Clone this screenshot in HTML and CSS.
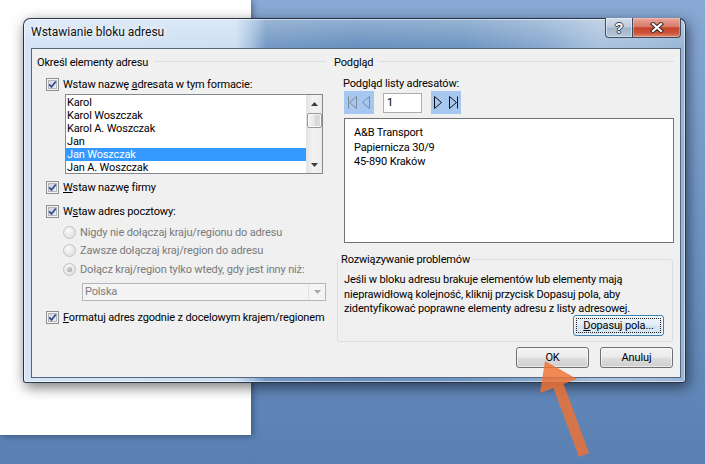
FILE: index.html
```html
<!DOCTYPE html>
<html lang="pl">
<head>
<meta charset="utf-8">
<title>Wstawianie bloku adresu</title>
<link rel="stylesheet" href="styles.css">
</head>
<body>
<div class="desktop">
  <div class="page"></div>
  <div class="dialog">
    <div class="titlebar">
      <span class="title">Wstawianie bloku adresu</span>
      <div class="caps">
        <div class="cap help"><span class="qmark">?</span></div>
        <div class="cap close">
          <svg width="14" height="11" viewBox="0 0 14 11"><path d="M3 2 L11 9 M11 2 L3 9" stroke="#3a2420" stroke-width="4.2" stroke-linecap="square" fill="none"/><path d="M3 2 L11 9 M11 2 L3 9" stroke="#fff" stroke-width="2.2" stroke-linecap="square" fill="none"/></svg>
        </div>
      </div>
    </div>
    <div class="client">
      <section class="col">
        <div class="ghead"><span>Określ elementy adresu</span></div>
        <div class="row r-name"><span class="cb"><svg width="11" height="11" viewBox="0 0 11 11"><path d="M2.3 5.4 L4.5 8 L8.8 2.4" fill="none" stroke="#2c4a8c" stroke-width="1.7"/></svg></span><span>Wstaw nazwę <u>a</u>dresata w tym formacie:</span></div>
        <div class="listbox">
          <ul class="items">
            <li>Karol</li>
            <li>Karol Woszczak</li>
            <li>Karol A. Woszczak</li>
            <li>Jan</li>
            <li class="sel">Jan Woszczak</li>
            <li>Jan A. Woszczak</li>
          </ul>
          <div class="vscroll">
            <div class="sarrow"><svg width="7" height="4" viewBox="0 0 7 4"><path d="M0 4 L3.5 0 L7 4Z" fill="#3c3c3c"/></svg></div>
            <div class="thumb"></div>
            <div class="track"></div>
            <div class="sarrow"><svg width="7" height="4" viewBox="0 0 7 4"><path d="M0 0 L3.5 4 L7 0Z" fill="#3c3c3c"/></svg></div>
          </div>
        </div>
        <div class="row r-firm"><span class="cb"><svg width="11" height="11" viewBox="0 0 11 11"><path d="M2.3 5.4 L4.5 8 L8.8 2.4" fill="none" stroke="#2c4a8c" stroke-width="1.7"/></svg></span><span><u>W</u>staw nazwę firmy</span></div>
        <div class="row r-post"><span class="cb"><svg width="11" height="11" viewBox="0 0 11 11"><path d="M2.3 5.4 L4.5 8 L8.8 2.4" fill="none" stroke="#2c4a8c" stroke-width="1.7"/></svg></span><span>W<u>s</u>taw adres pocztowy:</span></div>
        <div class="row radio r-rad1"><span class="rb"></span><span>Nigdy nie dołączaj kraju/regionu do adresu</span></div>
        <div class="row radio r-rad2"><span class="rb"></span><span>Zawsze dołączaj kraj/region do adresu</span></div>
        <div class="row radio r-rad3"><span class="rb"><span class="dot"></span></span><span>Dołącz kraj/region tylko wtedy, gdy jest inny niż:</span></div>
        <div class="combo">
          <span class="val">Polska</span>
          <span class="cbtn"><svg width="7" height="4" viewBox="0 0 7 4"><path d="M0 0 L3.5 4 L7 0Z" fill="#a8a8a8"/></svg></span>
        </div>
        <div class="row r-fmt"><span class="cb"><svg width="11" height="11" viewBox="0 0 11 11"><path d="M2.3 5.4 L4.5 8 L8.8 2.4" fill="none" stroke="#2c4a8c" stroke-width="1.7"/></svg></span><span><u>F</u>ormatuj adres zgodnie z docelowym krajem/regionem</span></div>
      </section>
      <section class="col">
        <div class="ghead"><span>Podgląd</span></div>
        <div class="sublabel">Podgląd listy adresatów:</div>
        <div class="nav">
          <div class="navgrp">
            <svg width="30" height="23" viewBox="0 0 30 23"><g fill="none" stroke="#7f8896" stroke-width="1"><path d="M4.5 5.5 V17.5"/><path d="M12.5 5.5 L5.5 11.5 L12.5 17.5 Z"/><path d="M25.5 5.5 L18.5 11.5 L25.5 17.5 Z"/></g></svg>
          </div>
          <div class="navnum">1</div>
          <div class="navgrp">
            <svg width="30" height="23" viewBox="0 0 30 23"><g fill="none" stroke="#111" stroke-width="1"><path d="M3.5 5.5 L10.5 11.5 L3.5 17.5 Z"/><path d="M18.5 5.5 L25.5 11.5 L18.5 17.5 Z"/><path d="M26.5 5.5 V17.5"/></g></svg>
          </div>
        </div>
        <div class="preview">A&amp;B Transport<br>Papiernicza 30/9<br>45-890 Kraków</div>
        <fieldset class="trouble">
          <legend>Rozwiązywanie problemów</legend>
          <div class="trouble-body">
            <p>Jeśli w bloku adresu brakuje elementów lub elementy mają<br>nieprawidłową kolejność, kliknij przycisk Dopasuj pola, aby<br>zidentyfikować poprawne elementy adresu z listy adresowej.</p>
            <div class="btn focus"><span><u>D</u>opasuj pola...</span></div>
          </div>
        </fieldset>
        <div class="actions">
          <div class="btn">OK</div>
          <div class="btn">Anuluj</div>
        </div>
      </section>
    </div>
  </div>
  <svg class="arrow" width="705" height="464" viewBox="0 0 705 464"><polygon points="545,361 577,379 563.6,383.9 589,453 579,457 553.4,388.1 540,393" fill="#f07232" fill-opacity="0.82"/></svg>
</div>
</body>
</html>
```

FILE: styles.css
```css
* { box-sizing: border-box; }
html, body { margin: 0; padding: 0; }
body {
  width: 705px;
  height: 464px;
  overflow: hidden;
  font-family: Roboto, "Liberation Sans", sans-serif;
  font-size: 11px;
  letter-spacing: -0.15px;
  color: #000;
}
.desktop {
  position: relative;
  width: 705px;
  height: 464px;
  overflow: hidden;
  background: linear-gradient(180deg, #89a9d5 0%, #7398c8 40%, #5a80b3 100%);
}
.page {
  position: absolute;
  left: 0;
  top: 0;
  width: 251px;
  height: 435px;
  background: #fff;
  box-shadow: 2px 1px 6px rgba(20, 30, 50, 0.45);
}
.dialog {
  position: absolute;
  left: 23px;
  top: 18px;
  width: 663px;
  height: 365px;
  display: flex;
  flex-direction: column;
  padding: 0 4px 4px 7px;
  border: 1px solid rgba(25, 38, 60, 0.9);
  border-radius: 7px 7px 3px 3px;
  background:
    linear-gradient(180deg, rgba(255,255,255,0.28) 0, rgba(255,255,255,0) 28px),
    linear-gradient(90deg, #d4e4f6 0, #cddff2 212px, #a9c4e2 226px, #7499c5 242px, #6991bf 330px, #6f96c2 440px, #89aacf 520px, #a9c2dd 575px, #a3bdda 620px, #97b4d5 663px);
  box-shadow: 2px 4px 14px rgba(0, 0, 0, 0.55), inset 0 0 0 1px rgba(255, 255, 255, 0.5);
}
.titlebar {
  height: 29px;
  display: flex;
  align-items: flex-start;
  flex: none;
}
.title {
  margin-top: 6px;
  font-size: 12px;
  letter-spacing: 0;
  line-height: 15px;
  color: #111;
  text-shadow: 0 0 6px rgba(255,255,255,0.9), 0 0 3px rgba(255,255,255,0.7);
}
.caps {
  margin-left: auto;
  display: flex;
  margin-top: -1px;
}
.cap {
  height: 20px;
  border: 1px solid #3e4c60;
  border-top: none;
  display: flex;
  align-items: center;
  justify-content: center;
}
.cap.help {
  width: 28px;
  border-radius: 0 0 0 4px;
  background: linear-gradient(180deg, #d2dde9 0%, #bccbdc 48%, #a2b4c9 52%, #b4c6da 100%);
  box-shadow: inset 0 0 0 1px rgba(255,255,255,0.45);
}
.qmark {
  font-family: "Liberation Sans", sans-serif;
  font-weight: bold;
  font-size: 14px;
  line-height: 14px;
  color: #fff;
  text-shadow: -1px 0 #2e3a4a, 1px 0 #2e3a4a, 0 -1px #2e3a4a, 0 1px #2e3a4a;
}
.cap.close {
  width: 48px;
  border-left: none;
  border-radius: 0 0 4px 0;
  background: linear-gradient(180deg, #e8a89a 0%, #d9796a 45%, #c5442c 52%, #cc5439 80%, #e08f72 100%);
  box-shadow: inset 0 0 0 1px rgba(255,220,210,0.35);
}
.cap svg { display: block; }
.client {
  flex: 1;
  background: #f0f0f0;
  border: 1px solid #54677e;
  padding: 6px 6px 0 5px;
  display: grid;
  grid-template-columns: 289px 340px;
  column-gap: 8px;
  align-items: start;
}
.col { display: flex; flex-direction: column; align-items: flex-start; }
.ghead {
  display: flex;
  align-items: center;
  height: 15px;
  line-height: 15px;
  align-self: stretch;
  white-space: nowrap;
}
.ghead::after {
  content: "";
  flex: 1;
  height: 1px;
  margin: -2px 0 0 6px;
  background: #d5dfe5;
}
.row {
  display: flex;
  align-items: center;
  height: 15px;
  line-height: 15px;
  white-space: nowrap;
  margin-left: 9px;
}
.cb {
  width: 13px;
  height: 13px;
  flex: none;
  margin-right: 4px;
  border: 1px solid #8e8f8f;
  background: linear-gradient(135deg, #c9cdd3, #f6f6f6);
  box-shadow: inset 0 0 0 1px #f4f4f4, inset 0 0 0 2px #b3b8be;
}
.cb svg { display: block; }
.r-name { margin-top: 7px; }
.listbox {
  margin: 2px 0 0 28px;
  width: 258px;
  height: 80px;
  border: 1px solid #828790;
  background: #fff;
  display: flex;
  overflow: hidden;
}
.items {
  list-style: none;
  margin: 0;
  padding: 1px 0 0 0;
  flex: 1;
  overflow: hidden;
}
.items li {
  height: 13px;
  line-height: 14px;
  padding-left: 1px;
  white-space: nowrap;
}
.items li.sel { background: #3399ff; color: #fff; }
.vscroll {
  width: 16px;
  flex: none;
  display: flex;
  flex-direction: column;
  align-items: center;
  background: linear-gradient(90deg, #e3e3e3, #f3f3f3 45%, #ececec);
}
.sarrow {
  width: 16px;
  height: 17px;
  flex: none;
  display: flex;
  align-items: center;
  justify-content: center;
}
.sarrow svg { display: block; }
.thumb {
  width: 15px;
  height: 15px;
  flex: none;
  margin-top: 1px;
  border: 1px solid #9a9a9a;
  border-radius: 2px;
  background: linear-gradient(90deg, #f4f4f4, #e6e6e6 50%, #d6d6d6 52%, #dddddd);
  box-shadow: inset 0 0 0 1px rgba(255,255,255,0.7);
}
.track { flex: 1; }
.r-firm { margin-top: 6px; }
.r-post { margin-top: 9px; }
.radio { margin-left: 26px; color: #7a7a7a; }
.r-rad1 { margin-top: 6px; }
.r-rad2 { margin-top: 3px; }
.r-rad3 { margin-top: 4px; }
.rb {
  width: 13px;
  height: 13px;
  flex: none;
  margin-right: 4px;
  border-radius: 50%;
  border: 1px solid #c4c4c4;
  background: radial-gradient(circle at 40% 35%, #fbfbfb, #e2e2e2 70%, #d9d9d9);
  display: flex;
  align-items: center;
  justify-content: center;
}
.dot {
  width: 5px;
  height: 5px;
  border-radius: 50%;
  background: radial-gradient(circle at 40% 35%, #d2d2d2, #9d9d9d);
}
.combo {
  margin: 6px 0 0 45px;
  width: 244px;
  height: 18px;
  border: 1px solid #b3b6b9;
  background: #f4f4f4;
  display: flex;
  color: #7a7a7a;
}
.combo .val { flex: 1; padding-left: 2px; line-height: 16px; }
.cbtn {
  width: 17px;
  flex: none;
  display: flex;
  align-items: center;
  justify-content: center;
  border-left: 1px solid #e2e2e2;
}
.r-fmt { margin-top: 9px; }
.sublabel { margin: 6px 0 0 9px; line-height: 15px; white-space: nowrap; }
.nav {
  margin-left: 10px;
  display: flex;
  align-items: center;
  height: 23px;
}
.navgrp { width: 30px; height: 23px; background: #a6c7ef; }
.navgrp svg { display: block; }
.navnum {
  width: 39px;
  height: 20px;
  margin: 0 9px;
  border: 1px solid #abadb3;
  background: #fff;
  padding-left: 3px;
  line-height: 18px;
}
.preview {
  margin: 4px 0 0 10px;
  width: 330px;
  height: 125px;
  border: 1px solid #727272;
  background: #fff;
  padding: 7px 0 0 9px;
  line-height: 14.5px;
  white-space: nowrap;
}
.trouble {
  margin: 9px 0 0 3px;
  width: 336px;
  height: 90px;
  min-width: 0;
  border: 1px solid #d5dfe5;
  border-radius: 3px;
  padding: 0;
}
.trouble legend {
  margin-left: 1px;
  padding: 0 2px;
  line-height: 15px;
  white-space: nowrap;
}
.trouble-body { padding: 6px 8px 0 6px; display: flex; flex-direction: column; }
.trouble-body p { margin: 0; line-height: 14.5px; white-space: nowrap; }
.btn {
  height: 21px;
  border: 1px solid #707070;
  border-radius: 3px;
  background: linear-gradient(180deg, #f2f2f2 0%, #ebebeb 48%, #dddddd 52%, #cfcfcf 100%);
  box-shadow: inset 0 0 0 1px rgba(255,255,255,0.6);
  display: flex;
  align-items: center;
  justify-content: center;
  line-height: 15px;
  white-space: nowrap;
}
.btn.focus {
  align-self: flex-end;
  width: 91px;
  margin-top: -2px;
  border-color: #3c7fb1;
  background: linear-gradient(180deg, #eef5fb 0%, #e2edf7 48%, #d3e3f2 52%, #dae8f5 100%);
  outline: 1px dotted #222;
  outline-offset: -4px;
}
.actions {
  align-self: stretch;
  margin: 5px 1px 0 0;
  display: flex;
  justify-content: flex-end;
  gap: 11px;
}
.actions .btn { width: 73px; }
.arrow {
  position: absolute;
  left: 0;
  top: 0;
  pointer-events: none;
}
```
